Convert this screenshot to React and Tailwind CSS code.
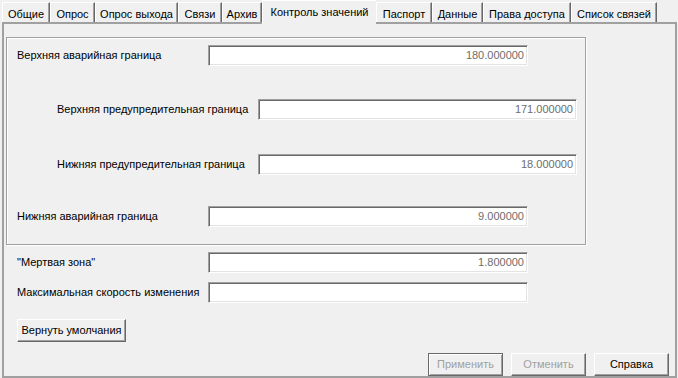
import React from "react";

const tabs = [
    { name: "Общие", w: "w-[48px]" },
    { name: "Опрос", w: "w-[45px]" },
    { name: "Опрос выхода", w: "w-[83px]" },
    { name: "Связи", w: "w-[44px]" },
    { name: "Архив", w: "w-[40px]" },
    { name: "Контроль значений", w: "w-[114px]", active: true },
    { name: "Паспорт", w: "w-[56px]" },
    { name: "Данные", w: "w-[51px]" },
    { name: "Права доступа", w: "w-[88px]" },
    { name: "Список связей", w: "w-[86px]" },
];

const Field = ({ value, width }) => (
    <div
        className={`${width} h-[21px] bg-white border border-t-[#a0a0a0] border-l-[#a0a0a0] border-r-white border-b-white shadow-[inset_1px_1px_0_#696969,inset_-1px_-1px_0_#e3e3e3] flex items-center justify-end pr-[3px] text-[#6d6d6d]`}
    >
        {value}
    </div>
);

const Row = ({ label, value, labelClass, width, className }) => (
    <div className={`flex items-center ${className}`}>
        <div className={labelClass}>{label}</div>
        <Field value={value} width={width} />
    </div>
);

const Button = ({ children, disabled, isDefault, className }) => (
    <button
        className={`h-[23px] bg-[#f0f0f0] flex items-center justify-center ${
            isDefault
                ? "border border-[#696969] shadow-[inset_1px_1px_0_#fff,inset_-1px_-1px_0_#a0a0a0]"
                : "border border-t-white border-l-white border-r-[#696969] border-b-[#696969] shadow-[inset_-1px_-1px_0_#a0a0a0]"
        } ${disabled ? "text-[#a0a0a0]" : "text-black"} ${className}`}
    >
        {children}
    </button>
);

export default function App() {
    return (
        <div className="w-[678px] h-[378px] bg-[#f0f0f0] overflow-hidden text-[11px] text-black font-['Liberation_Sans',Arial,sans-serif]">
            {/* tab strip */}
            <div className="h-[22px] flex items-end pl-[2px] relative z-10">
                {tabs.map((tab) =>
                    tab.active ? (
                        <div
                            key={tab.name}
                            className={`${tab.w} h-[24px] -mb-[2px] bg-[#f0f0f0] border-l border-t border-white flex justify-center pt-[3px]`}
                        >
                            {tab.name}
                        </div>
                    ) : (
                        <div
                            key={tab.name}
                            className={`${tab.w} h-[20px] border-l border-t border-white border-r border-r-[#696969] shadow-[inset_-1px_0_0_#a0a0a0] flex justify-center pt-[3px]`}
                        >
                            {tab.name}
                        </div>
                    )
                )}
            </div>

            {/* tab page */}
            <div className="ml-[2px] w-[675px] h-[356px] border-2 border-[#a0a0a0] flex flex-col">
                {/* group box */}
                <div className="ml-[2px] mt-[13px] w-[580px] h-[208px] border border-[#a0a0a0] shadow-[inset_1px_1px_0_#fff,1px_1px_0_#fff] flex flex-col">
                    <Row
                        className="mt-[7px]"
                        labelClass="pl-[10px] w-[201px]"
                        label="Верхняя аварийная граница"
                        value="180.000000"
                        width="w-[320px]"
                    />
                    <Row
                        className="mt-[33px]"
                        labelClass="pl-[50px] w-[251px]"
                        label="Верхняя предупредительная граница"
                        value="171.000000"
                        width="w-[319px]"
                    />
                    <Row
                        className="mt-[34px]"
                        labelClass="pl-[50px] w-[251px]"
                        label="Нижняя предупредительная граница"
                        value="18.000000"
                        width="w-[319px]"
                    />
                    <Row
                        className="mt-[31px]"
                        labelClass="pl-[10px] w-[201px]"
                        label="Нижняя аварийная граница"
                        value="9.000000"
                        width="w-[320px]"
                    />
                </div>

                <Row
                    className="mt-[7px]"
                    labelClass="pl-[13px] w-[204px]"
                    label={'"Мертвая зона"'}
                    value="1.800000"
                    width="w-[320px]"
                />
                <Row
                    className="mt-[9px]"
                    labelClass="pl-[13px] w-[204px] whitespace-nowrap"
                    label="Максимальная скорость изменения"
                    value=""
                    width="w-[320px]"
                />

                <div className="mt-[16px] ml-[13px]">
                    <Button className="w-[109px]">Вернуть умолчания</Button>
                </div>

                <div className="mt-[11px] flex justify-end gap-[8px] pr-[6px]">
                    <Button className="w-[75px] h-[22px]" disabled isDefault>
                        Применить
                    </Button>
                    <Button className="w-[75px] h-[22px]" disabled>
                        Отменить
                    </Button>
                    <Button className="w-[75px] h-[22px]">Справка</Button>
                </div>
            </div>
        </div>
    );
}
